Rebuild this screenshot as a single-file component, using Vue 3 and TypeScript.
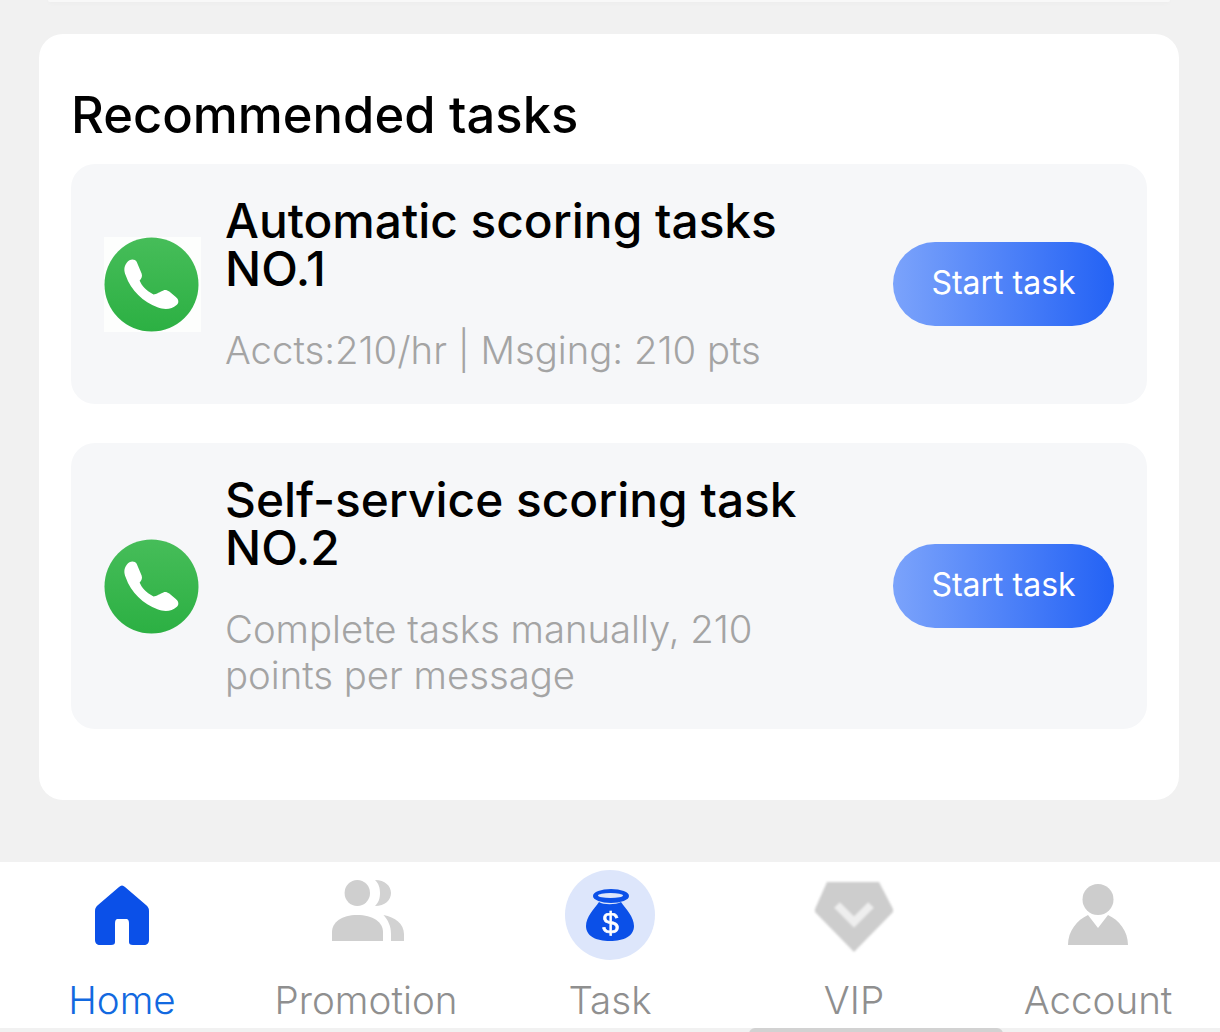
<template>
  <div class="page">
    <div class="top-card"></div>

    <section class="panel">
      <h2 class="panel-title">Recommended tasks</h2>
      <div class="task-list">
        <div v-for="task in tasks" :key="task.id" class="task">
          <div class="task-icon" :class="{ boxed: task.boxed }">
            <svg viewBox="0 0 96 96" width="95" height="95">
              <defs>
                <linearGradient :id="`green-${task.id}`" x1="0" y1="0" x2="0" y2="1">
                  <stop offset="0" stop-color="#46bd59" />
                  <stop offset="1" stop-color="#2cb043" />
                </linearGradient>
              </defs>
              <circle cx="48" cy="48" r="47.5" :fill="`url(#green-${task.id})`" />
              <path
                fill="#fff"
                d="M23 26C26 22 31 22 33 25L38 37C39 40 38 42 36 44C38 49 42 54 50 58C53 58 57 55 60 54C62 53 64 54 66 55L72 60C76 63 76 67 73 69C69 73 61 74 54 71C40 66 27 54 22 39C20 34 20 30 23 26Z"
              />
            </svg>
          </div>
          <div class="task-text">
            <div class="task-name">{{ task.name }}</div>
            <div class="task-desc">{{ task.desc }}</div>
          </div>
          <button class="start-btn">Start task</button>
        </div>
      </div>
    </section>

    <div class="spacer"></div>

    <nav class="tabbar">
      <div class="tab active">
        <div class="tab-icon">
          <svg viewBox="0 0 54 60" width="54" height="60">
            <path
              fill="#0b50e8"
              d="M24 2C26 0 28 0 30 2L51 20C53 22 54 23 54 26V55C54 58 52 60 49 60H38C35 60 34 59 34 57V39C34 35 33 34 31 34H23C21 34 20 35 20 39V57C20 59 19 60 16 60H5C2 60 0 58 0 55V26C0 23 1 22 3 20Z"
            />
          </svg>
        </div>
        <span class="tab-label">Home</span>
      </div>

      <div class="tab">
        <div class="tab-icon">
          <svg class="icon-promotion" viewBox="0 0 72 61" width="72" height="61">
            <ellipse cx="25.300" cy="13" rx="12.700" ry="13" fill="#cfcfcf" />
            <path fill="#d2d2d2" d="M43 0C53 0 59 6 59 13C59 20 53 26 43 26C47 22 48 18 48 13C48 8 47 4 43 0Z" />
            <path fill="#cfcfcf" d="M0 61V52C0 42 10 35 25 35C41 35 51 42 51 52V61Z" />
            <path fill="#d2d2d2" d="M51.500 35C63 37 72 44 72 54V61H59V54C59 46 56 40 51.500 35Z" />
          </svg>
        </div>
        <span class="tab-label">Promotion</span>
      </div>

      <div class="tab">
        <div class="tab-icon">
          <span class="task-circle">
            <svg viewBox="0 0 48 52" width="48" height="52">
              <ellipse cx="25" cy="7" rx="18" ry="7" fill="#0b50e8" />
              <path
                fill="#0b50e8"
                d="M13 13C17 16 30 16 35 13C40 20 48 28 48 37C48 47 38 52 24 52C10 52 0 47 0 37C0 28 8 20 13 13Z"
              />
              <ellipse cx="24.500" cy="6.500" rx="12.500" ry="2.600" fill="#dde6fb" />
              <text x="24.500" y="44" class="dollar">$</text>
            </svg>
          </span>
        </div>
        <span class="tab-label">Task</span>
      </div>

      <div class="tab">
        <div class="tab-icon">
          <svg class="soft" viewBox="0 0 78 70" width="78" height="70">
            <path fill="#cdcdcd" d="M12 0H64L78 27V30L39 70L0 30V27Z" />
            <path fill="none" stroke="#eeeeee" stroke-width="8" d="M22 23L39 40L56 23" />
          </svg>
        </div>
        <span class="tab-label">VIP</span>
      </div>

      <div class="tab">
        <div class="tab-icon">
          <svg class="icon-account" viewBox="0 0 60 61" width="60" height="61">
            <circle cx="30" cy="15.500" r="15.500" fill="#cdcdcd" />
            <path fill="#cdcdcd" d="M0 61C0 47 9 36 20 31L30 44L40 31C51 36 60 47 60 61Z" />
          </svg>
        </div>
        <span class="tab-label">Account</span>
      </div>
    </nav>

    <div class="home-strip"><span class="home-bar"></span></div>
  </div>
</template>

<script setup lang="ts">
interface Task {
  id: number
  name: string
  desc: string
  boxed: boolean
}

const tasks: Task[] = [
  {
    id: 1,
    name: 'Automatic scoring tasks NO.1',
    desc: 'Accts:210/hr | Msging: 210 pts',
    boxed: true
  },
  {
    id: 2,
    name: 'Self-service scoring task NO.2',
    desc: 'Complete tasks manually, 210 points per message',
    boxed: false
  }
]
</script>

<style>
html,
body {
  margin: 0;
  background: #f1f1f1;
}
</style>

<style scoped>
.page {
  display: flex;
  flex-direction: column;
  height: 1032px;
  overflow: hidden;
  background: #f1f1f1;
  font-family: Inter, 'Noto Sans', sans-serif;
}

.top-card {
  height: 2px;
  margin: 0 50px 32px 48px;
  background: #f8f8f8;
  border-radius: 0 0 12px 12px;
  box-shadow: 0 1px 4px rgba(0, 0, 0, 0.04);
}

.panel {
  margin: 0 41px 0 39px;
  padding: 49px 32px 71px;
  background: #fff;
  border-radius: 24px;
}

.panel-title {
  margin: 0 0 17px;
  font-size: 50.7px;
  line-height: 64px;
  font-weight: 500;
  color: #000;
}

.task-list {
  display: flex;
  flex-direction: column;
  gap: 39px;
}

.task {
  display: flex;
  align-items: center;
  padding: 32px 33px;
  background: #f6f7f9;
  border-radius: 24px;
}

.task-icon {
  flex: none;
  width: 97px;
  display: flex;
}

.task-icon svg {
  display: block;
  filter: blur(0.7px);
}

.task-icon.boxed {
  background: #fdfefd;
}

.task-text {
  flex: 1;
  min-width: 0;
  margin: 0 32px 0 24px;
}

.task-name {
  padding-top: 1px;
  font-size: 47.8px;
  line-height: 48px;
  font-weight: 500;
  color: #000;
}

.task-desc {
  margin-top: 34px;
  margin-bottom: -1px;
  font-size: 38.3px;
  line-height: 46px;
  font-weight: 300;
  color: #a4a4a4;
}

.start-btn {
  flex: none;
  width: 221px;
  height: 84px;
  padding: 0 0 3px;
  border: none;
  border-radius: 42px;
  background: linear-gradient(90deg, #7ba3fb, #2362f5);
  color: #fff;
  font-family: inherit;
  font-size: 32px;
}

.spacer {
  flex: 1;
}

.tabbar {
  display: grid;
  grid-template-columns: repeat(5, 1fr);
  height: 166px;
  background: #fff;
}

.tab {
  display: flex;
  flex-direction: column;
  align-items: center;
}

.tab-icon {
  display: flex;
  align-items: center;
  justify-content: center;
  height: 106px;
}

.tab-icon svg {
  display: block;
  filter: blur(0.6px);
}

.tab-icon svg.soft {
  margin-top: 4px;
  filter: blur(1.2px);
}

.icon-promotion {
  margin: 0 0 10px 4px;
}

.icon-account {
  margin-bottom: 2px;
}

.task-circle {
  display: flex;
  align-items: center;
  justify-content: center;
  width: 90px;
  height: 90px;
  border-radius: 50%;
  background: #dde6fb;
}

.dollar {
  fill: #fff;
  stroke: #fff;
  stroke-width: 0.6px;
  font-family: 'Liberation Sans', sans-serif;
  font-size: 30px;
  text-anchor: middle;
}

.tab-label {
  margin-top: 9px;
  font-size: 38.6px;
  line-height: 46px;
  font-weight: 300;
  color: #8f8f8f;
}

.tab.active .tab-label {
  color: #1269e0;
}

.home-strip {
  flex: none;
  height: 4px;
  display: flex;
  justify-content: center;
  overflow: hidden;
  background: #f1f1f1;
}

.home-bar {
  width: 254px;
  height: 12px;
  margin-left: 532px;
  border-radius: 6px;
  background: #d2d2d2;
}
</style>
